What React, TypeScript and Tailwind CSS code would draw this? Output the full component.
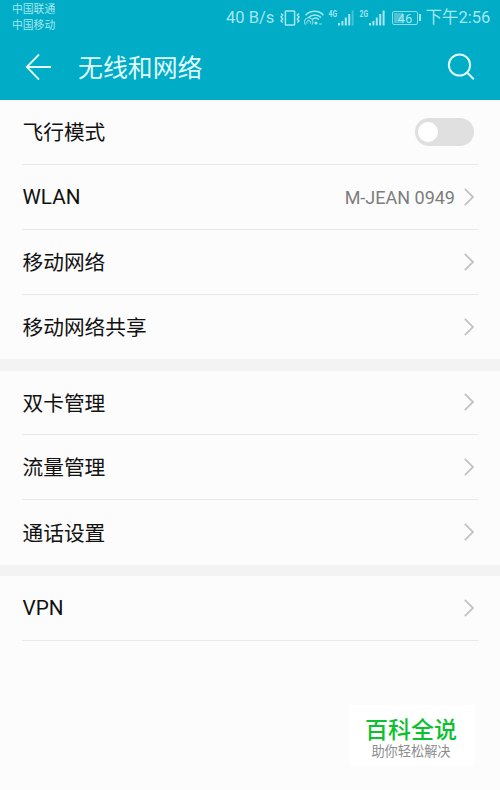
type Item = { label: string; value?: string; toggle?: boolean; latin?: boolean; box: string };

const groups: Item[][] = [
  [
    { label: "飞行模式", toggle: true, box: "h-[65px] border-b" },
    { label: "WLAN", value: "M-JEAN 0949", latin: true, box: "h-[65px] border-b" },
    { label: "移动网络", box: "h-[65px] border-b" },
    { label: "移动网络共享", box: "h-[64px]" },
  ],
  [
    { label: "双卡管理", box: "h-[64px] border-b" },
    { label: "流量管理", box: "h-[65px] border-b" },
    { label: "通话设置", box: "h-[65px]" },
  ],
  [{ label: "VPN", latin: true, box: "h-[65px] border-b" }],
];

function Chevron() {
  return (
    <svg className="ml-[9px] mr-1 mb-px h-[18px] w-[10px] shrink-0" viewBox="0 0 10 18" fill="none" stroke="#c3c3c3" strokeWidth="1.8">
      <path d="M0.8 0.9 L9 9 L0.8 17.1" />
    </svg>
  );
}

function Vibrate() {
  return (
    <svg className="ml-[6px] h-4 w-5 shrink-0" viewBox="0 0 20 16" fill="none" stroke="currentColor" strokeWidth="1.5">
      <rect x="5.4" y="1" width="9.2" height="14" rx="0.6" />
      <path d="M1 3.5 L2.7 5 L1 7 L2.7 9 L1 11 L2.7 12.5 M19 3.5 L17.3 5 L19 7 L17.3 9 L19 11 L17.3 12.5" />
    </svg>
  );
}

function Wifi() {
  return (
    <svg className="ml-1 h-4 w-5 shrink-0" viewBox="0 0 20 16" fill="none" stroke="currentColor" strokeWidth="1.5">
      <path d="M1.6 5.2 C6.4 0 15 0 19.4 5.2" />
      <path d="M4.6 7.6 C8.2 4 13.6 4 17 7.6" />
      <path d="M8.4 9.4 C10.3 7.8 13 7.8 14.8 9.6" />
      <circle cx="12" cy="13" r="1.6" fill="currentColor" stroke="none" />
      <path d="M1.6 14.6 A4.1 4.1 0 1 1 7.8 14.6 M3.4 13.6 A1.8 1.8 0 1 1 6 13.6 M15 14 H18" strokeWidth="1.1" opacity="0.8" />
    </svg>
  );
}

function Signal({ faded }: { faded?: boolean }) {
  return (
    <svg className="h-4 w-[17px] shrink-0" viewBox="0 0 17 16" fill="currentColor">
      <rect x="0" y="13" width="2" height="2.5" />
      <rect x="3.4" y="11" width="2" height="4.5" />
      <rect x="6.8" y="7.5" width="2" height="8" />
      <rect x="10.2" y="4" width="2" height="11.5" />
      <rect x="13.6" y="0.5" width="2" height="15" opacity={faded ? 0.4 : 1} />
    </svg>
  );
}

function NetworkLabel({ text }: { text: string }) {
  return (
    <svg className="mb-[9px] h-3 w-[10px] shrink-0 overflow-visible" viewBox="0 0 10 12" fill="currentColor">
      <text x="0.5" y="9.5" fontSize="9" fontWeight="700" textLength="8.5" lengthAdjust="spacingAndGlyphs">
        {text}
      </text>
    </svg>
  );
}

function Battery() {
  return (
    <div className="ml-[6px] flex items-center">
      <div className="relative h-[14px] w-[26px] rounded-[2px] border border-[#8adce7] p-px">
        <div className="h-full w-[9px] bg-[#4fc3d4]" />
        <span className="absolute inset-0 text-center text-[13px] leading-[13px]">46</span>
      </div>
      <div className="ml-px h-[7px] w-[1.5px] bg-[#a0e4ed]" />
    </div>
  );
}

function StatusBar() {
  return (
    <div className="flex h-[36px] text-[#a5e7ef]">
      <div className="ml-[12px] mt-[2px] w-[214px] text-[10.8px] leading-[16px]">
        <div>中国联通</div>
        <div>中国移动</div>
      </div>
      <div className="flex h-[35px] items-center whitespace-nowrap">
        <span className="w-[48px] text-[16.5px] leading-[20px]">40 B/s</span>
        <Vibrate />
        <Wifi />
        <span className="w-1" />
        <NetworkLabel text="4G" />
        <Signal faded />
        <span className="w-1" />
        <NetworkLabel text="2G" />
        <Signal />
        <Battery />
        <span className="ml-[5px] text-[16.5px] leading-[20px]">下午2:56</span>
      </div>
    </div>
  );
}

function Row({ item }: { item: Item }) {
  return (
    <div className={`mx-[22px] flex items-center border-[#e9e9e9] ${item.box}`}>
      <span className={`flex-1 pl-[0.5px] text-[20.7px] leading-[30px] text-[#111] ${item.latin ? "" : "pt-[2px]"}`}>
        {item.label}
      </span>
      {item.value && <span className="pt-px text-[18px] text-[#7c7c7c]">{item.value}</span>}
      {item.toggle ? (
        <div className="mr-1 flex h-[28px] w-[59px] items-center rounded-full bg-[#e0e0e0] pl-[3px]">
          <div className="size-[20px] rounded-full bg-white" />
        </div>
      ) : (
        <Chevron />
      )}
    </div>
  );
}

export default function App() {
  return (
    <div className="relative h-[790px] w-[500px] overflow-hidden bg-[#fcfcfc] font-[Roboto,'Noto_Sans_CJK_SC',sans-serif]">
      <header className="h-[100px] bg-[#00acc6]">
        <StatusBar />
        <div className="flex h-[62px] items-center text-[#e1fafc]">
          <svg className="ml-[25px] h-[28px] w-[27px]" viewBox="0 0 27 28" fill="none" stroke="currentColor" strokeWidth="1.8">
            <path d="M14 1.5 L1.8 14 L14 26.5 M1.8 14 H26" />
          </svg>
          <h1 className="ml-[26px] flex-1 pt-[4px] text-[24.9px] leading-[36px] font-normal">无线和网络</h1>
          <svg className="mr-[25px] h-[28px] w-[28px]" viewBox="0 0 28 28" fill="none" stroke="currentColor" strokeWidth="2">
            <circle cx="12.5" cy="12" r="10.6" />
            <path d="M20 19.5 L26.8 26.3" />
          </svg>
        </div>
      </header>
      <main>
        {groups.map((group, i) => (
          <section key={i}>
            {i === 1 && <div className="h-[12px] bg-[#f3f3f3]" />}
            {i === 2 && <div className="h-[11px] bg-[#f3f3f3]" />}
            {group.map((item) => (
              <Row key={item.label} item={item} />
            ))}
          </section>
        ))}
      </main>
      <div className="absolute left-[349px] top-[705px] flex h-[60px] w-[126px] flex-col items-center bg-white pr-[2px]">
        <div className="mt-[12px] text-[23px] leading-[28px] font-medium text-[#0cc130]">百科全说</div>
        <div className="-mt-px text-[13.2px] leading-[16px] text-[#8c8c8c]">助你轻松解决</div>
      </div>
    </div>
  );
}
